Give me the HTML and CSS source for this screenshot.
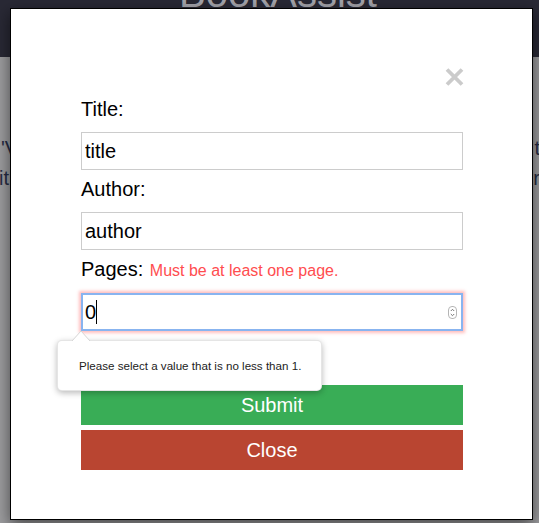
FILE: index.html
```html
<!DOCTYPE html>
<html lang="en">
<head>
<meta charset="utf-8">
<title>BookAssist</title>
<link rel="stylesheet" href="styles.css">
</head>
<body>
<div class="page">
  <header class="topbar"><h1 class="brand">BookAssist</h1></header>
  <main class="page-body">
    <div class="bgline"><span class="bg-left">'V</span><span class="bg-right">t</span></div>
    <div class="bgline"><span class="bg-left2">it</span><span class="bg-right">r</span></div>
  </main>
</div>

<div class="modal">
  <div class="modal-head">
    <svg class="close-x" width="19" height="18" viewBox="0 0 19 18" aria-label="close">
      <path d="M2 1.5 L17 16.5 M17 1.5 L2 16.5" stroke="#cbcbcb" stroke-width="3.8" fill="none"/>
    </svg>
  </div>
  <form class="form">
    <div class="field">
      <label class="label">Title:</label>
      <input class="text-input" type="text" value="title">
    </div>
    <div class="field">
      <label class="label">Author:</label>
      <input class="text-input" type="text" value="author">
    </div>
    <div class="field field-pages">
      <label class="label">Pages: <span class="error">Must be at least one page.</span></label>
      <div class="num-input">
        <span class="num-value">0</span><span class="caret"></span>
        <svg class="spinner" width="9" height="13" viewBox="0 0 9 13">
          <rect x="0.5" y="0.5" width="8" height="12" rx="3.5" fill="#fff" stroke="#b5b5b5"/>
          <path d="M2.8 5 L4.5 3.3 L6.2 5 M2.8 8 L4.5 9.7 L6.2 8" stroke="#666" stroke-width="0.9" fill="none"/>
        </svg>
      </div>
      <div class="tooltip">
        <svg class="tip-arrow" width="20" height="11" viewBox="0 0 20 11">
          <path d="M0 11 L9 1 L18 11" fill="#fff" stroke="#d6d6d6" stroke-width="1"/>
        </svg>
        Please select a value that is no less than 1.
      </div>
    </div>
    <button type="button" class="btn btn-submit">Submit</button>
    <button type="button" class="btn btn-close">Close</button>
  </form>
</div>
</body>
</html>
```
FILE: styles.css
```css
html, body {
  margin: 0;
  padding: 0;
}
body {
  width: 539px;
  height: 523px;
  overflow: hidden;
  font-family: "Liberation Sans", Arial, Helvetica, sans-serif;
  background: #9d9d9f;
}
.page {
  height: 523px;
  display: flex;
  flex-direction: column;
}
.topbar {
  height: 57px;
  flex: 0 0 57px;
  background: #292935;
  overflow: hidden;
}
.brand {
  margin: -27px 0 0;
  padding-left: 17px;
  font-size: 40px;
  line-height: 40px;
  font-weight: normal;
  color: #a4a4ab;
  text-align: center;
}
.page-body {
  flex: 1;
  background: #9d9d9f;
  padding-top: 76px;
  overflow: hidden;
}
.bgline {
  display: flex;
  justify-content: space-between;
  font-size: 20px;
  line-height: 30px;
  color: #272c44;
}
.bg-left {
  margin-left: 1px;
}
.bg-left2 {
  margin-left: -1px;
}
.bg-right {
  margin-right: -1px;
}

.modal {
  position: absolute;
  left: 10px;
  top: 8px;
  width: 523px;
  box-sizing: border-box;
  background: #fff;
  border: 1px solid #000;
  box-shadow: 0 5px 15px rgba(0, 0, 0, 0.55);
  padding: 59px 69px 49px 70px;
}
.modal-head {
  display: flex;
  justify-content: flex-end;
  height: 18px;
  margin-bottom: 12px;
}
.close-x {
  display: block;
  margin-right: -1px;
}
.form {
  display: flex;
  flex-direction: column;
}
.field {
  margin-bottom: 8px;
}
.field-pages {
  position: relative;
}
.label {
  display: block;
  font-size: 20px;
  line-height: 23px;
  margin-bottom: 11px;
  color: #000;
}
.error {
  font-size: 16px;
  color: #ff4d4f;
  margin-left: 1px;
}
.text-input {
  display: block;
  width: 100%;
  box-sizing: border-box;
  height: 38px;
  margin: 0;
  border: 1px solid #cccccc;
  border-radius: 0;
  padding: 0 3px;
  font-family: "Liberation Sans", Arial, Helvetica, sans-serif;
  font-size: 20px;
  color: #000;
  background: #fff;
  outline: none;
}
.num-input {
  height: 38px;
  box-sizing: border-box;
  border: 2px solid #88b4f0;
  box-shadow: 0 0 3px 2px rgba(255, 110, 110, 0.45);
  display: flex;
  align-items: center;
  padding: 0 4px 0 2px;
  font-size: 20px;
  color: #000;
  background: #fff;
}
.caret {
  display: inline-block;
  width: 1px;
  height: 24px;
  background: #000;
  margin-left: 0;
}
.spinner {
  margin-left: auto;
  display: block;
}
.tooltip {
  position: absolute;
  left: -24px;
  top: 82px;
  width: 265px;
  height: 51px;
  box-sizing: border-box;
  background: #fff;
  border: 1px solid rgba(0, 0, 0, 0.1);
  border-radius: 5px;
  box-shadow: 0 2px 6px rgba(0, 0, 0, 0.28);
  padding: 18px 0 0 21px;
  font-size: 11.6px;
  line-height: 14px;
  color: #222;
  z-index: 2;
}
.tip-arrow {
  position: absolute;
  left: 14px;
  top: -11px;
  display: block;
}
.btn {
  display: block;
  width: 100%;
  height: 40px;
  border: 0;
  border-radius: 0;
  margin: 0;
  padding: 0;
  font-family: "Liberation Sans", Arial, Helvetica, sans-serif;
  font-size: 20px;
  color: #fff;
}
.btn-submit {
  margin-top: 46px;
  background: #39ad56;
}
.btn-close {
  margin-top: 5px;
  background: #b94531;
}
```
